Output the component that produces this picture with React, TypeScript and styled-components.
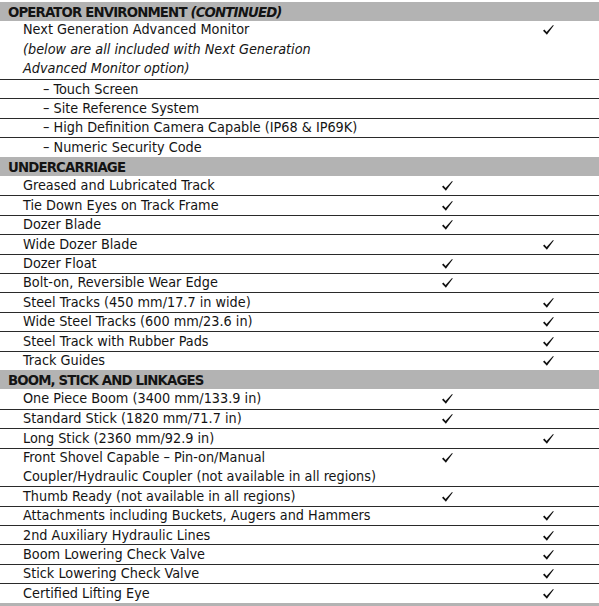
import React from "react";
import styled, { createGlobalStyle } from "styled-components";

const GlobalStyle = createGlobalStyle`
  html, body {
    margin: 0;
    padding: 0;
    background: #fff;
    overflow: hidden;
  }
  body {
    font-family: "DejaVu Sans Condensed", "Liberation Sans", sans-serif;
    color: #141414;
  }
`;

const LINE = 19.4;

const Sheet = styled.div`
  width: 599px;
  height: 606px;
  padding-top: 1.5px;
  box-sizing: border-box;
  overflow: hidden;
`;

const SectionHeader = styled.div`
  height: ${LINE}px;
  line-height: ${LINE}px;
  background: #b3b3b3;
  padding-left: 8px;
  font-size: 14.8px;
  font-weight: 700;
  letter-spacing: -0.85px;
  white-space: nowrap;
  overflow: hidden;
`;

const HeaderNote = styled.span`
  font-style: italic;
`;

const Row = styled.div<{ $first: boolean; $lines: number }>`
  display: grid;
  grid-template-columns: 396px 102px 101px;
  height: ${(p) => p.$lines * LINE}px;
  box-sizing: border-box;
  border-top: ${(p) => (p.$first ? "none" : "1px solid #2a2a2a")};
`;

const Label = styled.div<{ $indent: boolean }>`
  padding-left: ${(p) => (p.$indent ? 43 : 23)}px;
  font-size: 14.3px;
  line-height: ${LINE}px;
  white-space: nowrap;
  margin-top: -0.5px;
`;

const Italic = styled.span`
  font-style: italic;
`;

const Cell = styled.div`
  display: flex;
  justify-content: center;
  padding-top: 4.5px;
`;

const Check = () => (
  <svg width="11" height="10" viewBox="0 0 10.5 9.6" aria-hidden="true">
    <path d="M0 5.4 L1.3 4.4 L3.4 6.6 L9.6 0 L10.3 0.5 L3.7 9.4 Z" fill="#111" />
  </svg>
);

type Item = {
  lines: React.ReactNode[];
  indent?: boolean;
  std?: boolean;
  opt?: boolean;
};

type Section = {
  title: string;
  note?: string;
  items: Item[];
};

const sections: Section[] = [
  {
    title: "OPERATOR ENVIRONMENT",
    note: "(CONTINUED)",
    items: [
      {
        lines: [
          "Next Generation Advanced Monitor",
          <Italic key="a">(below are all included with Next Generation</Italic>,
          <Italic key="b">Advanced Monitor option)</Italic>,
        ],
        opt: true,
      },
      { lines: ["– Touch Screen"], indent: true },
      { lines: ["– Site Reference System"], indent: true },
      { lines: ["– High Definition Camera Capable (IP68 & IP69K)"], indent: true },
      { lines: ["– Numeric Security Code"], indent: true },
    ],
  },
  {
    title: "UNDERCARRIAGE",
    items: [
      { lines: ["Greased and Lubricated Track"], std: true },
      { lines: ["Tie Down Eyes on Track Frame"], std: true },
      { lines: ["Dozer Blade"], std: true },
      { lines: ["Wide Dozer Blade"], opt: true },
      { lines: ["Dozer Float"], std: true },
      { lines: ["Bolt-on, Reversible Wear Edge"], std: true },
      { lines: ["Steel Tracks (450 mm/17.7 in wide)"], opt: true },
      { lines: ["Wide Steel Tracks (600 mm/23.6 in)"], opt: true },
      { lines: ["Steel Track with Rubber Pads"], opt: true },
      { lines: ["Track Guides"], opt: true },
    ],
  },
  {
    title: "BOOM, STICK AND LINKAGES",
    items: [
      { lines: ["One Piece Boom (3400 mm/133.9 in)"], std: true },
      { lines: ["Standard Stick (1820 mm/71.7 in)"], std: true },
      { lines: ["Long Stick (2360 mm/92.9 in)"], opt: true },
      {
        lines: [
          "Front Shovel Capable – Pin-on/Manual",
          "Coupler/Hydraulic Coupler (not available in all regions)",
        ],
        std: true,
      },
      { lines: ["Thumb Ready (not available in all regions)"], std: true },
      { lines: ["Attachments including Buckets, Augers and Hammers"], opt: true },
      { lines: ["2nd Auxiliary Hydraulic Lines"], opt: true },
      { lines: ["Boom Lowering Check Valve"], opt: true },
      { lines: ["Stick Lowering Check Valve"], opt: true },
      { lines: ["Certified Lifting Eye"], opt: true },
    ],
  },
];

export default function App() {
  return (
    <>
      <GlobalStyle />
      <Sheet>
        {sections.map((section) => (
          <React.Fragment key={section.title}>
            <SectionHeader>
              {section.title}
              {section.note && <HeaderNote> {section.note}</HeaderNote>}
            </SectionHeader>
            {section.items.map((item, i) => (
              <Row key={`${section.title}-${i}`} $first={i === 0} $lines={item.lines.length}>
                <Label $indent={!!item.indent}>
                  {item.lines.map((line, j) => (
                    <div key={j}>{line}</div>
                  ))}
                </Label>
                <Cell>{item.std && <Check />}</Cell>
                <Cell>{item.opt && <Check />}</Cell>
              </Row>
            ))}
          </React.Fragment>
        ))}
        <SectionHeader />
      </Sheet>
    </>
  );
}
